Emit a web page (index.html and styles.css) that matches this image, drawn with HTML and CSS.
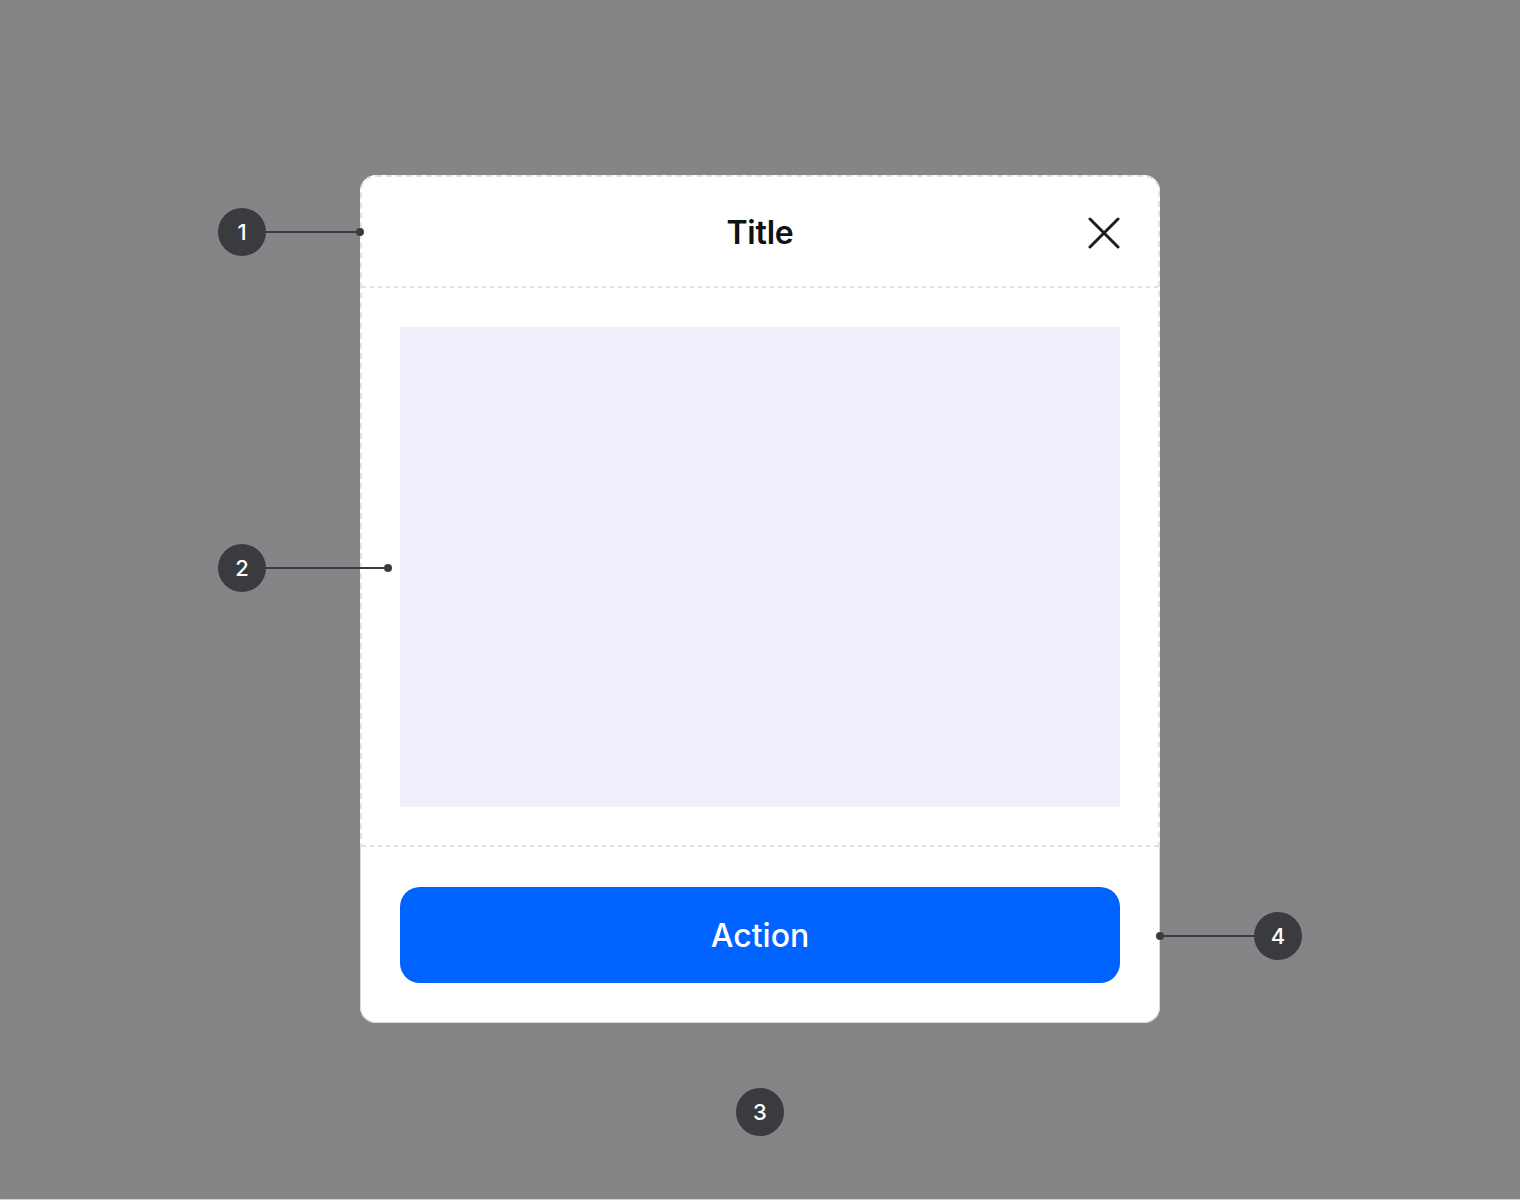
FILE: index.html
```html
<!DOCTYPE html>
<html>
<head>
<meta charset="utf-8">
<link rel="stylesheet" href="styles.css">
</head>
<body>
<div class="canvas">
  <div class="dialog">
    <div class="upper">
      <div class="header">
        <span></span>
        <h1 class="title">Title</h1>
        <button class="close" aria-label="Close">
          <svg width="32" height="32" viewBox="0 0 32 32"><path d="M2 2 L30 30 M30 2 L2 30" stroke="#1c1c1e" stroke-width="3" stroke-linecap="round" fill="none"/></svg>
        </button>
      </div>
      <div class="body">
        <div class="placeholder"></div>
      </div>
    </div>
    <div class="footer">
      <button class="action">Action</button>
    </div>

    <div class="note note-1"><span class="badge">1</span><span class="line line-90"></span><span class="dot"></span></div>
    <div class="note note-2"><span class="badge">2</span><span class="line line-118"></span><span class="dot"></span></div>
    <div class="note note-4"><span class="dot"></span><span class="line line-90"></span><span class="badge">4</span></div>
    <div class="note note-3"><span class="badge">3</span></div>
  </div>
</div>
</body>
</html>
```

FILE: styles.css
```css
* { box-sizing: border-box; }
html { background: #d4d4d6; }
body {
  margin: 0;
  font-family: Inter, "Noto Sans", "Liberation Sans", sans-serif;
}
.canvas {
  height: 1199px;
  background: #858587;
  display: flex;
  justify-content: center;
  padding-top: 175px;
}
.dialog {
  position: relative;
  width: 800px;
  height: 848px;
  background: #ffffff;
  border-radius: 16px;
  display: flex;
  flex-direction: column;
}
.upper {
  border: 2px dashed #e2e2e4;
  border-bottom: none;
  border-radius: 16px 16px 0 0;
}
.header {
  height: 111px;
  padding: 0 38px;
  background-image: repeating-linear-gradient(to right, #e2e2e4 0 4px, transparent 4px 8px);
  background-size: 100% 2px;
  background-position: left bottom;
  background-repeat: no-repeat;
  display: grid;
  grid-template-columns: 1fr auto 1fr;
  align-items: center;
}
.title {
  margin: 0;
  font-size: 32px;
  font-weight: 600;
  color: #111111;
  letter-spacing: -0.2px;
}
.close {
  justify-self: end;
  width: 32px;
  height: 32px;
  padding: 0;
  border: none;
  background: none;
  display: flex;
}
.body {
  padding: 39px 38px 40px;
  background-image: repeating-linear-gradient(to right, #e2e2e4 0 4px, transparent 4px 8px);
  background-size: 100% 2px;
  background-position: left bottom;
  background-repeat: no-repeat;
}
.placeholder {
  height: 480px;
  background: #f0eefb;
}
.footer {
  flex: 1;
  border: 1px solid #d9d9db;
  border-top: none;
  border-radius: 0 0 16px 16px;
  padding: 40px 39px 39px;
}
.action {
  width: 100%;
  height: 96px;
  border: none;
  border-radius: 20px;
  background: #0062ff;
  color: #ffffff;
  font-family: Inter, "Noto Sans", "Liberation Sans", sans-serif;
  font-size: 32px;
  font-weight: 500;
}
.note {
  position: absolute;
  display: flex;
  align-items: center;
  height: 48px;
}
.badge {
  width: 48px;
  height: 48px;
  border-radius: 50%;
  background: #3a3b3f;
  color: #ffffff;
  font-size: 22px;
  font-weight: 500;
  display: flex;
  align-items: center;
  justify-content: center;
}
.line {
  height: 2px;
  background: #3a3b3f;
}
.line-90 { width: 90px; }
.line-118 { width: 118px; }
.dot {
  width: 8px;
  height: 8px;
  border-radius: 50%;
  background: #3a3b3f;
}
.note-1 { left: -142px; top: 33px; }
.note-2 { left: -142px; top: 369px; }
.note-4 { left: 796px; top: 737px; }
.note-3 { left: 376px; top: 913px; }
```
